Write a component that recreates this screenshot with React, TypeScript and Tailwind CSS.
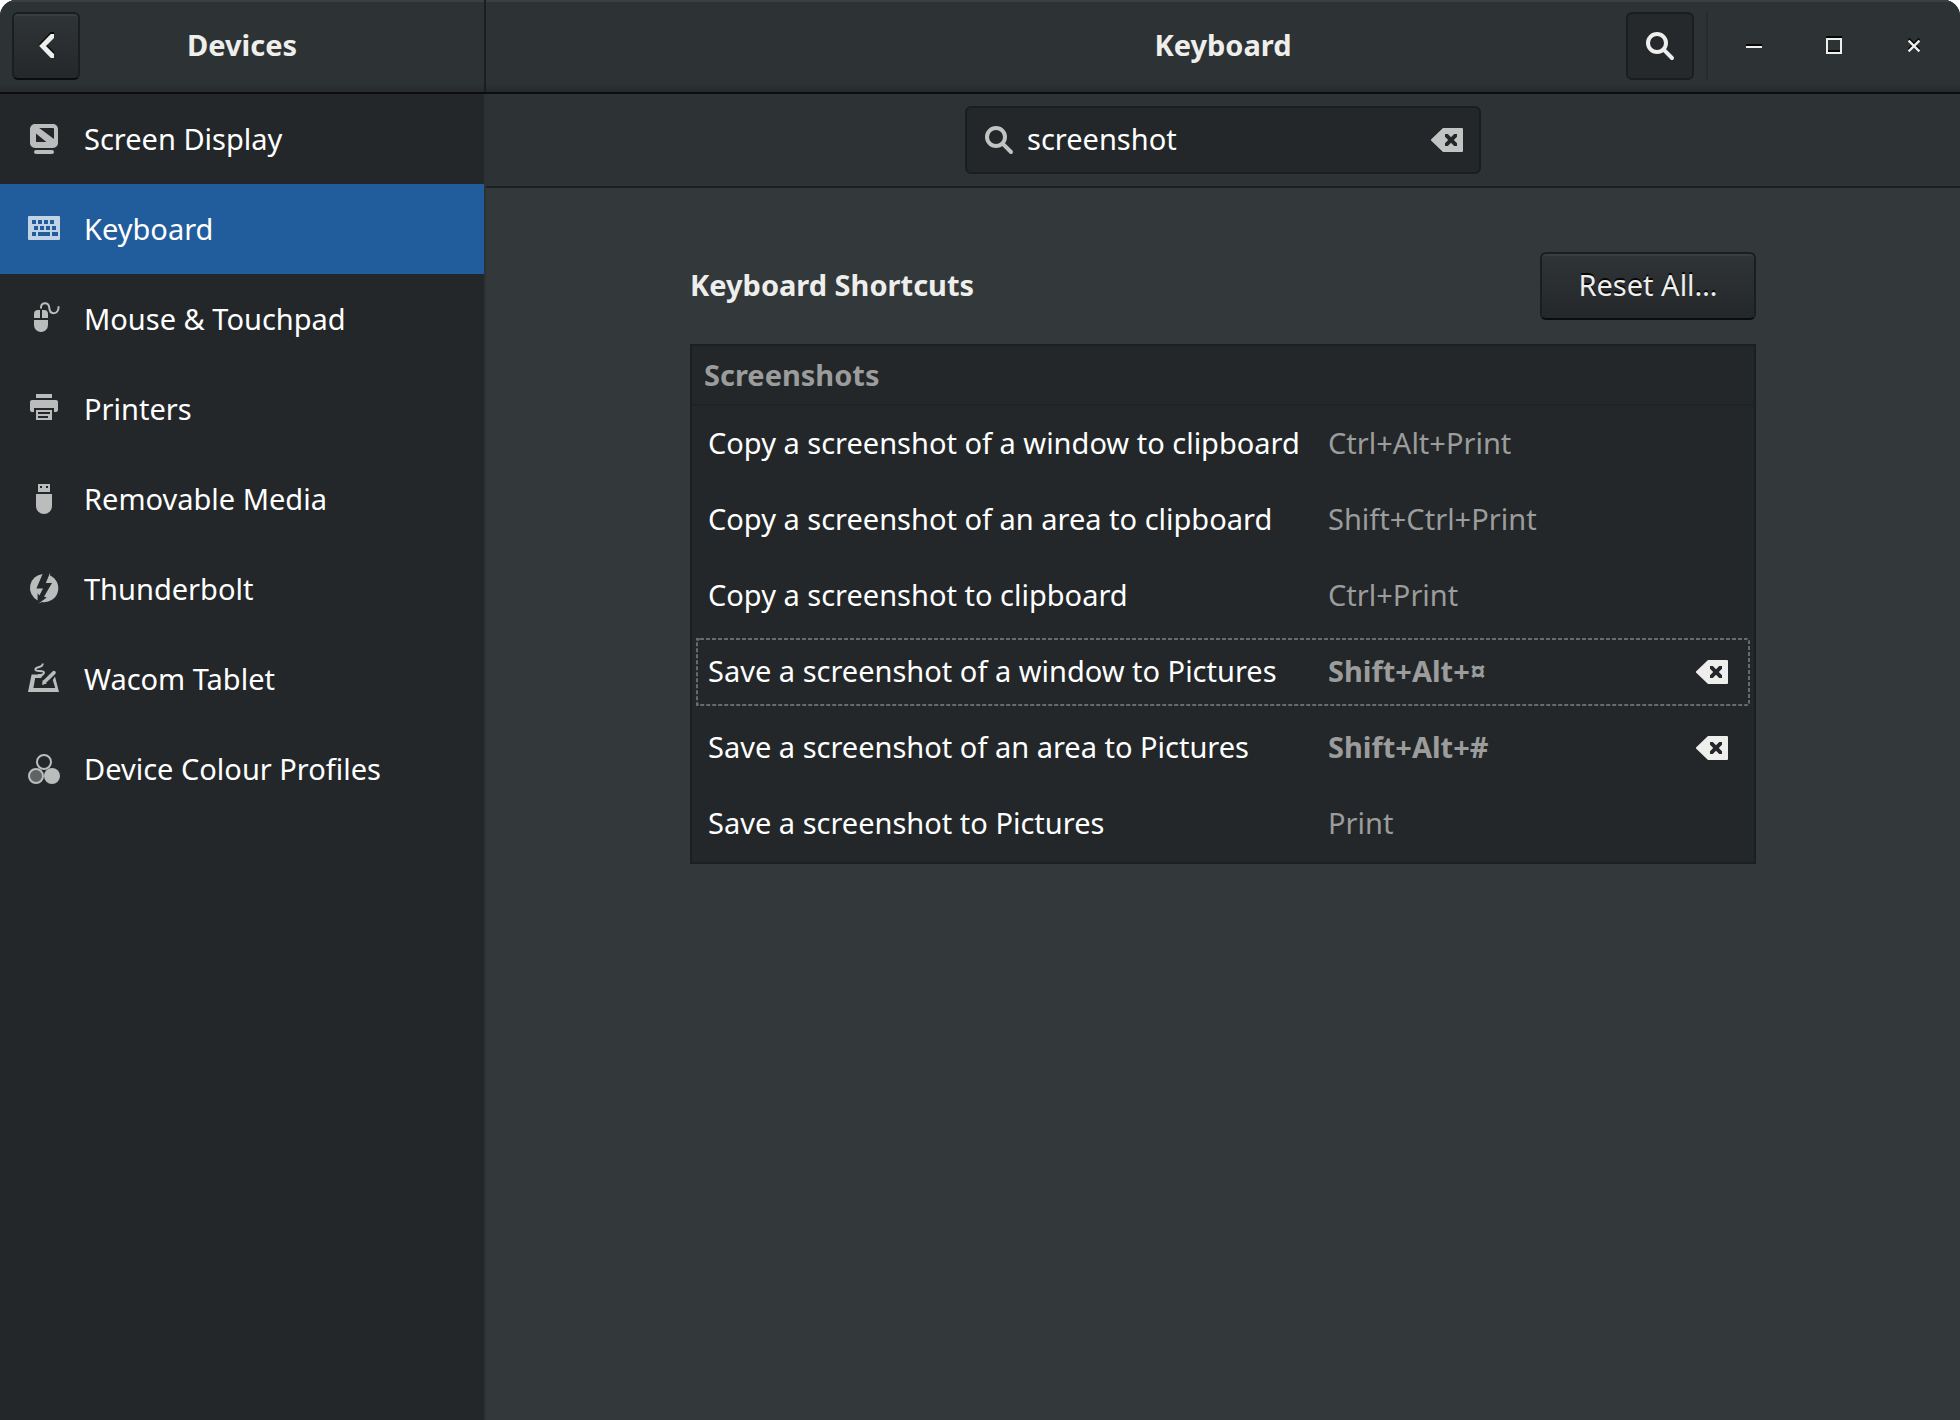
import type { ReactNode } from "react";

function Icon({ children, className = "" }: { children: ReactNode; className?: string }) {
  return (
    <svg viewBox="0 0 16 16" aria-hidden="true" fill="currentColor" className={`size-8 shrink-0 ${className}`}>
      {children}
    </svg>
  );
}

function SearchIcon({ className = "" }: { className?: string }) {
  return (
    <Icon className={className}>
      <circle cx="6.5" cy="6.5" r="4.5" fill="none" stroke="currentColor" strokeWidth="2" />
      <path d="M10.2 10.2 14 14" fill="none" stroke="currentColor" strokeWidth="2" strokeLinecap="round" />
    </Icon>
  );
}

function ClearIcon() {
  return (
    <Icon>
      <path
        fillRule="evenodd"
        d="M6 2h9.5a.5.5 0 0 1 .5.5v11a.5.5 0 0 1-.5.5H6L0 8.3v-.6zM7 5v1.4L8.6 8 7 9.6V11h1.4L10 9.4l1.6 1.6H13V9.6L11.4 8 13 6.4V5h-1.4L10 6.6 8.4 5z"
      />
    </Icon>
  );
}

const devices: { name: string; icon: ReactNode; active?: boolean }[] = [
  {
    name: "Screen Display",
    icon: (
      <>
        <path
          fillRule="evenodd"
          d="M3.5 1h9A2.5 2.5 0 0 1 15 3.5v7a2.5 2.5 0 0 1-2.5 2.5h-9A2.5 2.5 0 0 1 1 10.5v-7A2.5 2.5 0 0 1 3.5 1zM5.6 3 13 8.5V3.5a.5.5 0 0 0-.5-.5zM4 5.8V10h5.2z"
        />
        <rect x="3" y="14" width="10" height="2" rx="1" />
      </>
    ),
  },
  {
    name: "Keyboard",
    active: true,
    icon: (
      <path
        fillRule="evenodd"
        d="M.5 2h15a.5.5 0 0 1 .5.5v11a.5.5 0 0 1-.5.5H.5a.5.5 0 0 1-.5-.5v-11A.5.5 0 0 1 .5 2zM2 4v2h2V4zm3 0v2h2V4zm3 0v2h2V4zm3 0v2h2V4zM3 7v2h2V7zm3 0v2h2V7zm3 0v2h2V7zm3 0v2h2V7zM2 10v2h2v-2zm3 0v2h6v-2zm7 0v2h3v-2z"
      />
    ),
  },
  {
    name: "Mouse & Touchpad",
    icon: (
      <>
        <path d="M3 8V6a2 2 0 0 1 2-2h1v4zm4-4h1a2 2 0 0 1 2 2v2H7zM3 9h7v2.5a3.5 3.5 0 0 1-7 0z" />
        <path
          d="M6.5 3.2V2.5C6.8.1 10.2-.1 10.6 2.7c.1 1.6.7 2.9 2.2 2.9 1.7 0 2.6-1.5 2.5-3.5"
          fill="none"
          stroke="currentColor"
        />
      </>
    ),
  },
  {
    name: "Printers",
    icon: (
      <path
        fillRule="evenodd"
        d="M4 1h8v2H4zM2 4h12a1 1 0 0 1 1 1v4a1 1 0 0 1-1 1h-1V8H3v2H2a1 1 0 0 1-1-1V5a1 1 0 0 1 1-1zM4 9h8v5H4zM5 10v1h6v-1zm0 2v1h5v-1z"
      />
    ),
  },
  {
    name: "Removable Media",
    icon: <path fillRule="evenodd" d="M5 1h6v4H5zM6 2v1h1V2zm3 0v1h1V2zM4 6h8v6a4 4 0 0 1-8 0z" />,
  },
  {
    name: "Thunderbolt",
    icon: (
      <>
        <path d="M7.300 1A7 7 0 0 0 4.800 14.200V10.600L5.700 11.700 7.500 8.200H4.200z" />
        <path d="M11.100.2 8.900 5.500H12L8 12.400l1.400.3-4.200 3 1.800-.7A7 7 0 0 0 11 1.700z" />
      </>
    ),
  },
  {
    name: "Wacom Tablet",
    icon: (
      <>
        <path d="M1.800 6.200H7.800L6.500 8H3.600L2.700 13H13.600L12.400 9 13.500 7.200 15.500 15H0z" />
        <path d="M8.300 9.900 13 5.300" fill="none" stroke="currentColor" strokeWidth="1.800" strokeLinecap="round" />
        <path d="M7 11.500 7.400 9l2 1.700z" />
        <path
          d="M7.400.8C7.400 3.200 3.700 2.200 3.700 3.700S8 3.700 8 5.300C8 6.500 6.600 6.600 5 6.600"
          fill="none"
          stroke="currentColor"
        />
      </>
    ),
  },
  {
    name: "Device Colour Profiles",
    icon: (
      <>
        <circle cx="8" cy="5" r="3.5" fill="none" stroke="currentColor" strokeWidth="1" />
        <circle cx="4" cy="12" r="3.5" fillOpacity=".4" stroke="currentColor" strokeWidth="1" />
        <circle cx="12" cy="12" r="4" />
      </>
    ),
  },
];

const shortcuts = [
  { action: "Copy a screenshot of a window to clipboard", keys: "Ctrl+Alt+Print" },
  { action: "Copy a screenshot of an area to clipboard", keys: "Shift+Ctrl+Print" },
  { action: "Copy a screenshot to clipboard", keys: "Ctrl+Print" },
  { action: "Save a screenshot of a window to Pictures", keys: "Shift+Alt+¤", custom: true, focused: true },
  { action: "Save a screenshot of an area to Pictures", keys: "Shift+Alt+#", custom: true },
  { action: "Save a screenshot to Pictures", keys: "Print" },
];

function WindowControl({ label, children }: { label: string; children: ReactNode }) {
  return (
    <button
      type="button"
      aria-label={label}
      className="flex size-[68px] items-center justify-center [filter:drop-shadow(0_-2px_0_rgba(0,0,0,0.85))]"
    >
      {children}
    </button>
  );
}

function HeaderBar() {
  return (
    <header className="flex h-[94px] border-b-2 border-[#0c0e0e] bg-linear-to-b from-[#2d3234] from-90% to-[#272a2c] shadow-[inset_0_2px_0_#3a3f41]">
      <div className="grid w-[486px] shrink-0 grid-cols-[68px_1fr_68px] items-center border-r-2 border-[#1b1e1f] px-3">
        <button
          type="button"
          aria-label="Back"
          className="flex size-[68px] items-center justify-center rounded-md border-2 border-[#1b1e1f] border-b-[#0b0c0c] bg-linear-to-b from-[#2f3436] to-[#25282a] shadow-[inset_0_2px_0_#3a3e40]"
        >
          <Icon className="[filter:drop-shadow(0_-2px_0_rgba(0,0,0,0.85))]">
            <path d="M12 2v2L8 8l4 4v2h-1.600L4.600 8l5.800-6z" />
          </Icon>
        </button>
        <h1 className="pb-[2px] text-center font-bold">Devices</h1>
      </div>
      <div className="grid flex-1 grid-cols-[1fr_auto_1fr] items-center px-3">
        <h2 className="col-start-2 pb-[2px] font-bold">Keyboard</h2>
        <div className="flex gap-3 justify-self-end">
          <button
            type="button"
            aria-label="Search"
            aria-pressed="true"
            className="flex size-[68px] items-center justify-center rounded-md border-2 border-[#1b1e1f] bg-[#25292b]"
          >
            <SearchIcon />
          </button>
          <div className="w-[2px] bg-[#272b2d]" />
          <WindowControl label="Minimize">
            <Icon>
              <path d="M4 8h8v1H4z" />
            </Icon>
          </WindowControl>
          <WindowControl label="Maximize">
            <Icon>
              <path fillRule="evenodd" d="M4 4h8v8H4zM5 5v6h6V5z" />
            </Icon>
          </WindowControl>
          <WindowControl label="Close">
            <Icon>
              <path d="m5.300 5.300 5.400 5.400m0-5.400-5.400 5.400" fill="none" stroke="currentColor" strokeWidth="1.100" />
            </Icon>
          </WindowControl>
        </div>
      </div>
    </header>
  );
}

function Sidebar() {
  return (
    <nav aria-label="Devices" className="w-[486px] shrink-0 border-r-2 border-[#2c3133] bg-[#232729] text-white">
      <ul>
        {devices.map((device) => (
          <li key={device.name}>
            <a
              href="#"
              aria-current={device.active ? "page" : undefined}
              className={`flex h-[90px] items-center gap-6 px-7 ${device.active ? "bg-[#215d9c]" : ""}`}
            >
              <Icon className={`mb-[2px] ${device.active ? "text-[#c2d3e5]" : "text-[#bbbdbd]"}`}>{device.icon}</Icon>
              {device.name}
            </a>
          </li>
        ))}
      </ul>
    </nav>
  );
}

function SearchBar() {
  return (
    <div className="flex h-[94px] items-center justify-center border-b-2 border-[#1d2021] bg-[#2d3234]">
      <div className="flex h-[68px] w-[516px] items-center gap-3 rounded-md border-2 border-[#1b1e1f] bg-[#232729] px-4 text-[#c2c3c3]">
        <SearchIcon />
        <input
          type="text"
          aria-label="Search shortcuts"
          defaultValue="screenshot"
          className="min-w-0 flex-1 bg-transparent pb-[2px] text-white outline-none"
        />
        <button type="button" aria-label="Clear search">
          <ClearIcon />
        </button>
      </div>
    </div>
  );
}

function FocusRing() {
  return (
    <span className="pointer-events-none absolute inset-1">
      <svg aria-hidden="true" className="size-full">
        <rect width="100%" height="100%" rx="4" fill="none" stroke="#686b6c" strokeWidth="4" strokeDasharray="4 2" />
      </svg>
    </span>
  );
}

function Shortcuts() {
  return (
    <section className="mx-auto w-full max-w-[1066px] py-16">
      <div className="flex items-center justify-between">
        <h3 className="pb-[2px] font-bold">Keyboard Shortcuts</h3>
        <button
          type="button"
          className="h-[68px] w-[216px] rounded-md border-2 border-[#1b1e1f] border-b-[#0b0c0c] bg-linear-to-b from-[#2f3436] to-[#25282a] pb-[2px] shadow-[inset_0_2px_0_#3a3e40] [text-shadow:0_-2px_0_rgba(0,0,0,0.85)]"
        >
          Reset All…
        </button>
      </div>
      <div className="mt-6 border-2 border-[#1c1f20] bg-[#232729]">
        <h4 id="group" className="flex h-[60px] items-center border-b-2 border-[#1f2324] px-3 font-bold text-[#9b9c9b]">
          Screenshots
        </h4>
        <table aria-labelledby="group" className="w-full table-fixed border-collapse">
          <colgroup>
            <col />
            <col className="w-[340px]" />
            <col className="w-[86px]" />
          </colgroup>
          <tbody>
            {shortcuts.map((s) => (
              <tr key={s.action} className="relative h-[76px]">
                <td className="pb-[2px] pl-4 text-white">
                  {s.action}
                  {s.focused && <FocusRing />}
                </td>
                <td className={`pb-[2px] text-[#9b9c9b] ${s.custom ? "font-bold" : ""}`}>{s.keys}</td>
                <td>
                  {s.custom && (
                    <button type="button" aria-label={`Reset ${s.action}`} className="mr-[26px] ml-auto block">
                      <ClearIcon />
                    </button>
                  )}
                </td>
              </tr>
            ))}
          </tbody>
        </table>
      </div>
    </section>
  );
}

export default function App() {
  return (
    <div className="flex min-h-screen flex-col overflow-hidden rounded-t-2xl bg-[#33383a] font-['Noto_Sans',sans-serif] text-[29px] leading-[38px] text-[#eeeeec]">
      <HeaderBar />
      <div className="flex flex-1">
        <Sidebar />
        <main className="min-w-0 flex-1">
          <SearchBar />
          <Shortcuts />
        </main>
      </div>
    </div>
  );
}
